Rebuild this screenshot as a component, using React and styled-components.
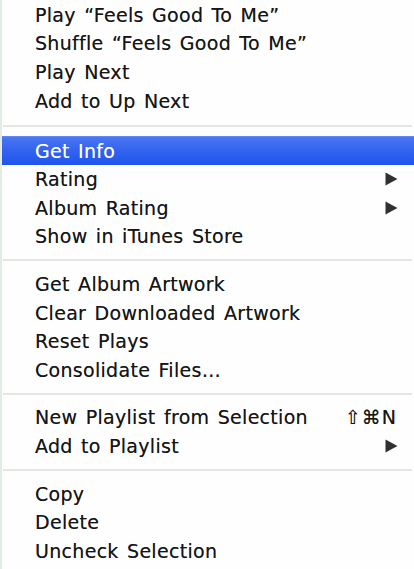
import React from "react";
import styled, { createGlobalStyle } from "styled-components";

const GlobalStyle = createGlobalStyle`
  html, body {
    margin: 0;
    padding: 0;
    background: #ffffff;
  }
  body {
    font-family: "DejaVu Sans", "Liberation Sans", sans-serif;
  }
`;

const sections = [
  {
    gap: 21.5,
    items: [
      { label: "Play “Feels Good To Me”" },
      { label: "Shuffle “Feels Good To Me”" },
      { label: "Play Next" },
      { label: "Add to Up Next" },
    ],
  },
  {
    gap: 19,
    items: [
      { label: "Get Info", active: true },
      { label: "Rating", submenu: true },
      { label: "Album Rating", submenu: true },
      { label: "Show in iTunes Store" },
    ],
  },
  {
    gap: 19,
    items: [
      { label: "Get Album Artwork" },
      { label: "Clear Downloaded Artwork" },
      { label: "Reset Plays" },
      { label: "Consolidate Files…" },
    ],
  },
  {
    gap: 19,
    items: [
      { label: "New Playlist from Selection", shortcut: "⇧⌘N" },
      { label: "Add to Playlist", submenu: true },
    ],
  },
  {
    items: [
      { label: "Copy" },
      { label: "Delete" },
      { label: "Uncheck Selection" },
    ],
  },
];

const Arrow = () => (
  <svg width="13" height="14" viewBox="0 0 13 14">
    <path d="M0.5 0.5 L12.5 7 L0.5 13.5 Z" fill="currentColor" />
  </svg>
);

const ContextMenu = () => (
  <Menu>
    {sections.map((section, i) => (
      <React.Fragment key={i}>
        {section.items.map((item) => (
          <Item key={item.label} $active={item.active}>
            <Label>{item.label}</Label>
            {item.shortcut && <Shortcut>{item.shortcut}</Shortcut>}
            {item.submenu && (
              <Submenu $active={item.active}>
                <Arrow />
              </Submenu>
            )}
          </Item>
        ))}
        {section.gap && <Separator $gap={section.gap} />}
      </React.Fragment>
    ))}
  </Menu>
);

export default function App() {
  return (
    <>
      <GlobalStyle />
      <ContextMenu />
    </>
  );
}

const Menu = styled.div`
  width: 414px;
  height: 569px;
  box-sizing: border-box;
  padding-top: 0.5px;
  background: #fdfefd;
  border-left: 2px solid #e3ece3;
  overflow: hidden;
  display: flex;
  flex-direction: column;
`;

const Item = styled.div`
  height: 28.6px;
  flex: none;
  display: flex;
  align-items: center;
  padding: 0 16px 0 33px;
  font-size: 19px;
  letter-spacing: 0.3px;
  word-spacing: 2px;
  font-variant-ligatures: none;
  color: ${(p) => (p.$active ? "#ffffff" : "#151515")};
  text-shadow: ${(p) =>
    p.$active ? "0 0 0.4px rgba(255,255,255,0.6)" : "0 0 0.5px rgba(0,0,0,0.5)"};
  background: ${(p) =>
    p.$active
      ? "linear-gradient(to bottom, #6a8cf3 0%, #4a74f1 6%, #2e60ee 60%, #1f55ec 100%)"
      : "transparent"};
`;

const Label = styled.span`
  flex: 1;
  white-space: nowrap;
`;

const Shortcut = styled.span`
  font-size: 19px;
  letter-spacing: 1px;
  word-spacing: 0;
  padding-right: 1px;
`;

const Submenu = styled.span`
  display: flex;
  color: ${(p) => (p.$active ? "#ffffff" : "#303030")};
`;

const Separator = styled.div`
  height: ${(p) => p.$gap}px;
  flex: none;
  display: flex;
  align-items: center;
  padding: 0 2px 0 1px;

  &::after {
    content: "";
    flex: 1;
    height: 2px;
    background: #e4e6e4;
  }
`;
